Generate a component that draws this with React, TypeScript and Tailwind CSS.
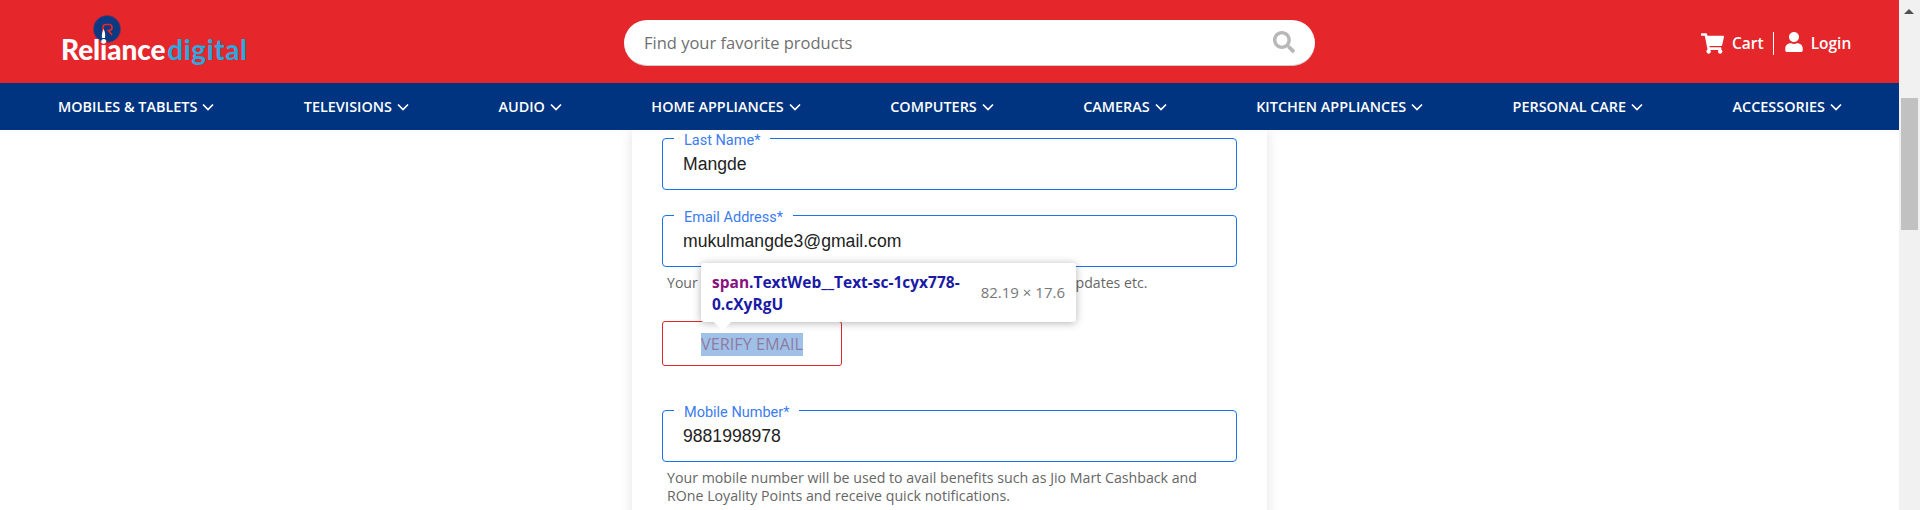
import React from 'react';
import { FaSearch, FaShoppingCart, FaUser } from 'react-icons/fa';

const navItems = [
  'MOBILES & TABLETS',
  'TELEVISIONS',
  'AUDIO',
  'HOME APPLIANCES',
  'COMPUTERS',
  'CAMERAS',
  'KITCHEN APPLIANCES',
  'PERSONAL CARE',
  'ACCESSORIES',
];

const Chevron: React.FC = () => (
  <svg viewBox="0 0 12 8" className="w-[12px] h-[8px] ml-[5px] mt-[2px]" fill="none">
    <path d="M1 1.5 L6 6.5 L11 1.5" stroke="#fff" strokeWidth="1.7" />
  </svg>
);

const Logo: React.FC = () => (
  <div className="relative w-[190px] h-[52px] mt-[14px] ml-[61px] shrink-0">
    <svg viewBox="0 0 28 28" className="absolute left-[32px] top-[1px] w-[28px] h-[28px]">
      <circle cx="14" cy="14" r="13.6" fill="#0b3a82" stroke="#8f2f55" strokeWidth="0.6" />
      <path d="M10 22 V12 C10 10.5 11 9.5 13 9.5 H16 C18 9.5 19 11 19 12.5 C19 14.5 17.5 15.5 15.5 15.5 L19 20" fill="none" stroke="#e5262b" strokeWidth="1.7" />
      <path d="M10.5 14 C12 16.5 12.5 19 12 23 H9 C8.5 19 9.5 17 10.5 14 Z" fill="#fff" />
    </svg>
    <div className="absolute left-0 top-[19px] flex items-baseline font-['Lato',sans-serif] text-[28px] leading-[32px] font-black tracking-[-0.1px]">
      <span className="text-white">Reliance</span>
      <span className="text-[#2aa9e0] font-bold ml-[2px] tracking-[0.5px]">digital</span>
    </div>
  </div>
);

const Field: React.FC<{ label: string; value: string; className?: string }> = ({ label, value, className }) => (
  <fieldset className={`h-[58px] border border-[#1a73e8] rounded-[4px] pl-[20px] pr-3 ${className ?? ''}`}>
    <legend className="relative top-[3px] ml-[-9px] px-[10px] font-['Roboto',sans-serif] text-[14.5px] leading-[12px] text-[#3b7cf0]">
      {label}
    </legend>
    <div className="font-['Liberation_Sans',sans-serif] text-[17.6px] leading-[20px] mt-[10px] text-[#222]">{value}</div>
  </fieldset>
);

const App: React.FC = () => {
  return (
    <div className="flex w-[1920px] h-[510px] overflow-hidden bg-white">
      <div className="flex flex-col w-[1899px] h-full">
        <header className="flex items-start h-[83px] bg-[#e5262b] shrink-0">
          <Logo />

          <div className="flex items-center justify-between w-[691px] h-[46px] mt-[20px] ml-[373px] pl-[20px] pr-[20px] bg-white rounded-[23px] border-b border-[#ccc]">
            <span className="mt-[1px] font-['Open_Sans',sans-serif] text-[16.5px] text-[#6f6f6f]">Find your favorite products</span>
            <FaSearch size={22} color="#b8b8b8" className="mb-[1px]" />
          </div>

          <div className="flex items-center mt-[31px] ml-[386px] text-white font-['Open_Sans',sans-serif] text-[15.5px] font-semibold">
            <FaShoppingCart size={23} />
            <span className="ml-[8px] mt-[1px]">Cart</span>
            <div className="w-px h-[23px] bg-white ml-[9px]" />
            <FaUser size={20} className="ml-[10px] mb-[3px]" />
            <span className="ml-[7px] mt-[1px]">Login</span>
          </div>
        </header>

        <nav className="flex items-center justify-between h-[47px] pl-[58px] pr-[57px] bg-[#003380] shrink-0">
          {navItems.map((item) => (
            <div key={item} className="flex items-center font-['Open_Sans',sans-serif] text-[14.4px] font-semibold text-white">
              {item}
              <Chevron />
            </div>
          ))}
        </nav>

        <main className="flex-1 min-h-0 overflow-hidden">
          <div className="relative w-[635px] h-[500px] ml-[632px] pt-[2px] pl-[30px] pr-[30px] bg-white shadow-[0_0_12px_rgba(0,0,0,0.12)]">
            <Field label="Last Name*" value="Mangde" />
            <Field label="Email Address*" value="mukulmangde3@gmail.com" className="mt-[19px]" />
            <p className="mt-[6px] pl-[5px] font-['Open_Sans',sans-serif] text-[14.1px] leading-[20px] text-[#666]">
              Your email address will be used to send order details, offers, updates etc.
            </p>

            <button className="flex items-center justify-center w-[180px] h-[45px] mt-[28px] border border-[#e5262b] rounded-[3px] font-['Open_Sans',sans-serif] text-[16.3px] text-[#8f7ba0]">
              <span className="mt-[1px] bg-[#9fc1e8] leading-[23px]">VERIFY EMAIL</span>
            </button>

            <Field label="Mobile Number*" value="9881998978" className="mt-[38px]" />
            <p className="mt-[7px] pl-[5px] w-[560px] font-['Open_Sans',sans-serif] text-[14.2px] leading-[18px] text-[#666]">
              Your mobile number will be used to avail benefits such as Jio Mart Cashback and
              ROne Loyality Points and receive quick notifications.
            </p>

            {/* devtools inspect tooltip */}
            <div className="absolute left-[69px] top-[133px] flex items-center w-[375px] h-[59px] pl-[11px] pr-[11px] bg-white rounded-[3px] shadow-[0_1px_8px_rgba(0,0,0,0.3)] font-['Open_Sans',sans-serif] text-[15px]">
              <div className="absolute left-[15px] bottom-[-6px] w-[13px] h-[13px] rotate-45 bg-white" />
              <div className="relative w-[262px] leading-[22px] font-bold text-[15.5px] text-[#1a1aa6]">
                <span className="text-[#881280]">span</span>.TextWeb__Text-sc-1cyx778-0.cXyRgU
              </div>
              <div className="relative ml-auto text-[#777] whitespace-nowrap">82.19 × 17.6</div>
            </div>
          </div>
        </main>
      </div>

      {/* scrollbar */}
      <div className="relative w-[21px] h-full bg-[#f1f1f1] shrink-0">
        <div className="absolute left-[5px] top-[9px] w-0 h-0 border-x-[5px] border-x-transparent border-b-[5px] border-b-[#505050]" />
        <div className="absolute left-[2px] top-[98px] w-[17px] h-[132px] bg-[#c1c1c1]" />
      </div>
    </div>
  );
};

export default App;
